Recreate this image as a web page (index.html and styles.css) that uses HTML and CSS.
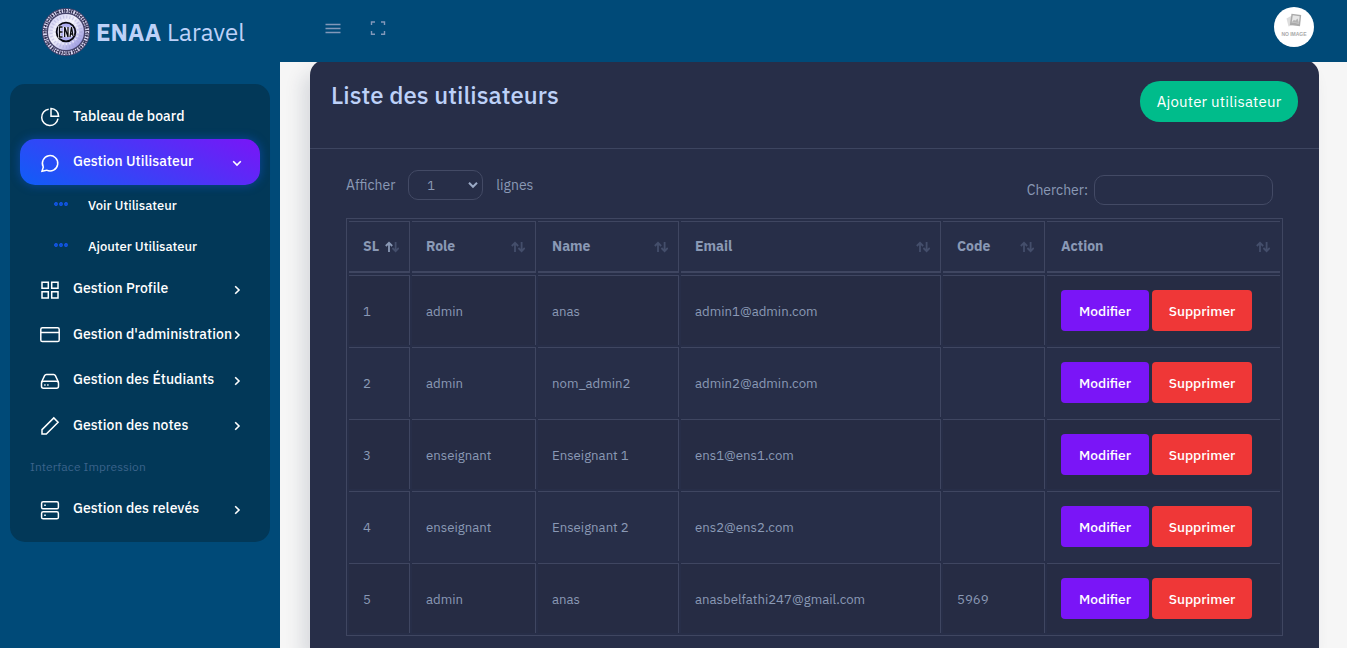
FILE: index.html
```html
<!DOCTYPE html>
<html lang="fr">
<head>
<meta charset="utf-8">
<title>ENAA Laravel</title>
<link rel="stylesheet" href="styles.css">
</head>
<body>
<div class="app">
  <aside class="sidebar">
    <a class="brand">
      <svg class="brand-logo" viewBox="0 0 48 48">
        <defs>
          <linearGradient id="seal" x1="0" y1="0" x2="1" y2="1"><stop offset="0" stop-color="#cfcef5"/><stop offset=".45" stop-color="#f0effa"/><stop offset="1" stop-color="#8583dc"/></linearGradient>
        </defs>
        <circle cx="24" cy="24" r="24" fill="#45436a"/>
        <circle cx="24" cy="24" r="21.2" fill="none" stroke="#d7d5ee" stroke-width="3.8" stroke-dasharray="1.3 1.2 .8 1.2 1.8 1"/>
        <circle cx="24" cy="24" r="21.2" fill="none" stroke="#28253f" stroke-width="1.2" stroke-dasharray="1 2.2 1.6 1.4"/>
        <circle cx="24" cy="24" r="18" fill="url(#seal)"/>
        <circle cx="24" cy="24" r="15" fill="none" stroke="#9d9bd0" stroke-width="3" stroke-dasharray="1.2 2" opacity=".4"/>
        <circle cx="24" cy="24" r="12" fill="none" stroke="#fff" stroke-width="2" stroke-dasharray="1.5 2" opacity=".6"/>
        <circle cx="24" cy="24" r="9.4" fill="#aeadf0" stroke="#08080f" stroke-width="1.8"/>
        <path d="M20.5 19H17.5V29H20.5M17.5 24H20.5M22.7 29V19L26 29V19M28 29L29.5 19L31 28M28 26H31" fill="none" stroke="#fff" stroke-width="2.6"/>
        <path d="M20.5 19H17.5V29H20.5M17.5 24H20.5M22.7 29V19L26 29V19M28 29L29.5 19L31 28M28 26H31" fill="none" stroke="#08080f" stroke-width="1.3"/>
      </svg>
      <span class="brand-name"><b>ENAA</b> Laravel</span>
    </a>
    <nav class="menu">
      <a class="item"><svg class="icon" viewBox="0 0 20 20"><path d="M8.7 2.2A8.2 8.2 0 1 0 18 11.7M11 1.5V9.2H18.6A7.7 7.7 0 0 0 11 1.5Z"/></svg><span>Tableau de board</span></a>
      <a class="item active"><svg class="icon" viewBox="0 0 20 20"><path d="M2 18.3L3.3 14A7.7 7.7 0 1 1 6.6 17.2Z"/></svg><span>Gestion Utilisateur</span><svg class="chev" viewBox="0 0 10 10"><path d="M1.2 3.2L5 7L8.8 3.2"/></svg></a>
      <a class="subitem"><svg class="dots" viewBox="0 0 14 4"><circle cx="2" cy="2" r="1.2"/><circle cx="7" cy="2" r="1.2"/><circle cx="12" cy="2" r="1.2"/></svg><span>Voir Utilisateur</span></a>
      <a class="subitem"><svg class="dots" viewBox="0 0 14 4"><circle cx="2" cy="2" r="1.2"/><circle cx="7" cy="2" r="1.2"/><circle cx="12" cy="2" r="1.2"/></svg><span>Ajouter Utilisateur</span></a>
      <a class="item"><svg class="icon" viewBox="0 0 20 20"><path d="M2 2.2H8.3V8.3H2ZM11.7 2.2H18V8.3H11.7ZM2 11.8H8.3V18H2ZM11.7 11.8H18V18H11.7Z"/></svg><span>Gestion Profile</span><svg class="chev" viewBox="0 0 10 10"><path d="M3.2 1.2L7 5L3.2 8.8"/></svg></a>
      <a class="item"><svg class="icon" viewBox="0 0 20 20"><rect x=".8" y="2.8" width="18.4" height="13.8" rx="1.6"/><path d="M.8 7.5H19.2"/></svg><span>Gestion d'administration</span><svg class="chev" viewBox="0 0 10 10"><path d="M3.2 1.2L7 5L3.2 8.8"/></svg></a>
      <a class="item"><svg class="icon" viewBox="0 0 20 20"><path d="M1.5 11.2L4.6 4.6Q5.2 3.4 6.4 3.4H13.6Q14.8 3.4 15.4 4.6L18.5 11.2"/><rect x="1.5" y="10.2" width="17" height="7" rx="2"/><path d="M4.2 14H5.6M7.2 14H8.6"/></svg><span>Gestion des Étudiants</span><svg class="chev" viewBox="0 0 10 10"><path d="M3.2 1.2L7 5L3.2 8.8"/></svg></a>
      <a class="item"><svg class="icon" viewBox="0 0 20 20"><path d="M2 18V13.6L13.8 1.9L18.1 6.2L6.3 18Z"/></svg><span>Gestion des notes</span><svg class="chev" viewBox="0 0 10 10"><path d="M3.2 1.2L7 5L3.2 8.8"/></svg></a>
      <div class="menu-label">Interface Impression</div>
      <a class="item"><svg class="icon" viewBox="0 0 20 20"><rect x="1.6" y="1.8" width="16.8" height="7" rx="1.6"/><rect x="1.6" y="11.8" width="16.8" height="7" rx="1.6"/><path d="M4.2 5.3H5.8M4.2 15.3H5.8"/></svg><span>Gestion des relevés</span><svg class="chev" viewBox="0 0 10 10"><path d="M3.2 1.2L7 5L3.2 8.8"/></svg></a>
    </nav>
  </aside>
  <div class="main">
    <header class="topbar">
      <svg class="top-icon" viewBox="0 0 16 16"><path d="M.5 4.5H15.5M.5 8.5H15.5M.5 12.5H15.5"/></svg>
      <svg class="top-icon" viewBox="0 0 16 16"><path class="full" d="M1.5 5V2H5M11 2H14.5V5M14.5 11V14.2H11M5 14.2H1.5V11"/></svg>
      <svg class="avatar" viewBox="0 0 40 40"><circle cx="20" cy="20" r="20" fill="#fff"/><path d="M12.5 11.5L17 9L19 18L14.5 19.5Z" fill="#ddd"/><path d="M17.5 6.8L27.2 8L26 19.3L15.8 18Z" fill="#aaa"/><path d="M18.8 8.3L25.7 9.2L24.8 16.5L17.7 15.6Z" fill="#e6e6e6"/><path d="M17.8 15.2L20 12.8L21.2 13.8L23.6 11.5L24.9 16L17.8 15.5Z" fill="#b4b4b4"/><text x="20" y="29.2" text-anchor="middle" class="no-image" textLength="25">NO IMAGE</text></svg>
    </header>
    <main class="content">
      <section class="card">
        <div class="card-head"><h3>Liste des utilisateurs</h3><a class="btn-add">Ajouter utilisateur</a></div>
        <div class="card-body">
          <div class="controls">
            <label class="length">Afficher <span class="select"><span>1</span><svg viewBox="0 0 10 8"><path d="M1 1.8L5 5.8L9 1.8"/></svg></span> lignes</label>
            <label class="search">Chercher: <input type="text"></label>
          </div>
          <table>
            <colgroup><col class="c1"><col class="c2"><col class="c3"><col class="c4"><col class="c5"><col class="c6"></colgroup>
            <thead><tr>
              <th><div class="th"><span>SL</span><svg viewBox="0 0 14 12"><path class="up" d="M4 11V2M.8 5L4 1.8L7.2 5"/><path d="M10.6 1V10M7.4 7L10.6 10.2L13.8 7"/></svg></div></th>
              <th><div class="th"><span>Role</span><svg viewBox="0 0 14 12"><path d="M4 11V2M.8 5L4 1.8L7.2 5"/><path d="M10.6 1V10M7.4 7L10.6 10.2L13.8 7"/></svg></div></th>
              <th><div class="th"><span>Name</span><svg viewBox="0 0 14 12"><path d="M4 11V2M.8 5L4 1.8L7.2 5"/><path d="M10.6 1V10M7.4 7L10.6 10.2L13.8 7"/></svg></div></th>
              <th><div class="th"><span>Email</span><svg viewBox="0 0 14 12"><path d="M4 11V2M.8 5L4 1.8L7.2 5"/><path d="M10.6 1V10M7.4 7L10.6 10.2L13.8 7"/></svg></div></th>
              <th><div class="th"><span>Code</span><svg viewBox="0 0 14 12"><path d="M4 11V2M.8 5L4 1.8L7.2 5"/><path d="M10.6 1V10M7.4 7L10.6 10.2L13.8 7"/></svg></div></th>
              <th><div class="th"><span>Action</span><svg viewBox="0 0 14 12"><path d="M4 11V2M.8 5L4 1.8L7.2 5"/><path d="M10.6 1V10M7.4 7L10.6 10.2L13.8 7"/></svg></div></th>
            </tr></thead>
            <tbody>
              <tr><td>1</td><td>admin</td><td>anas</td><td>admin1@admin.com</td><td></td><td><div class="actions"><a class="btn edit">Modifier</a><a class="btn del">Supprimer</a></div></td></tr>
              <tr><td>2</td><td>admin</td><td>nom_admin2</td><td>admin2@admin.com</td><td></td><td><div class="actions"><a class="btn edit">Modifier</a><a class="btn del">Supprimer</a></div></td></tr>
              <tr><td>3</td><td>enseignant</td><td>Enseignant 1</td><td>ens1@ens1.com</td><td></td><td><div class="actions"><a class="btn edit">Modifier</a><a class="btn del">Supprimer</a></div></td></tr>
              <tr><td>4</td><td>enseignant</td><td>Enseignant 2</td><td>ens2@ens2.com</td><td></td><td><div class="actions"><a class="btn edit">Modifier</a><a class="btn del">Supprimer</a></div></td></tr>
              <tr><td>5</td><td>admin</td><td>anas</td><td>anasbelfathi247@gmail.com</td><td>5969</td><td><div class="actions"><a class="btn edit">Modifier</a><a class="btn del">Supprimer</a></div></td></tr>
            </tbody>
          </table>
        </div>
      </section>
    </main>
  </div>
</div>
</body>
</html>
```
FILE: styles.css
```css
* { box-sizing: border-box; }
body { margin: 0; font-family: "IBM Plex Sans", Roboto, "Noto Sans", sans-serif; font-size: 14px; color: #8a99b5; }
svg { display: block; flex: none; fill: none; }
.app { display: flex; height: 648px; }

.sidebar { width: 280px; flex: none; background: #004a78; }
.brand { display: flex; align-items: center; height: 84px; padding: 0 0 20px 42px; gap: 6px; }
.brand-logo { width: 48px; height: 48px; }
.brand-name { font-size: 24px; color: #bdd1f8; white-space: nowrap; letter-spacing: .05px; }
.brand-name b { font-weight: 700; }
.menu { margin: 0 10px; height: 458px; padding: 10px; border-radius: 15px; background: #023858; color: #fff; }
.item { display: flex; align-items: center; height: 45.4px; padding: 0 18px 0 20px; border-radius: 15px; font-weight: 500; white-space: nowrap; }
.item span { margin: -2px 0 0 13px; flex: 1 0 0; width: 0; letter-spacing: .05px; }
.item.active { background: linear-gradient(28deg, #0f5ef7, #7a15f7); box-shadow: 0 0 10px 1px rgba(20, 90, 235, .4); }
.icon { width: 20px; height: 20px; stroke: #fff; stroke-width: 1.5; margin-top: 1px; }
.chev { width: 10px; height: 10px; stroke: #fff; stroke-width: 1.6; margin-top: 1px; }
.subitem { display: flex; align-items: center; height: 41px; padding-left: 34px; gap: 20px; font-size: 13px; font-weight: 500; }
.dots { width: 14px; height: 4px; stroke: #1458f5; stroke-width: 1.4; margin-top: -3px; }
.menu-label { height: 38px; line-height: 37px; padding-left: 10px; font-size: 12px; letter-spacing: .1px; color: #3b638b; }

.main { flex: 1; display: flex; flex-direction: column; min-width: 0; }
.topbar { position: relative; z-index: 2; flex: none; display: flex; align-items: center; height: 62px; padding: 0 33px 8px 45px; gap: 29px; background: #004a78; }
.top-icon { width: 16px; height: 16px; stroke: #8298b9; stroke-width: 1.3; margin-top: 2px; }
.top-icon .full { stroke-width: 1.4; }
.avatar { width: 40px; height: 40px; margin-left: auto; }
.no-image { font: 700 5px "Liberation Sans", sans-serif; fill: #aaa; }

.content { flex: 1; min-height: 0; padding: 0 28px 0 30px; background: #f6f6f6; overflow: clip; overflow-clip-margin: 2px; }
.card { height: 588px; margin-top: -2px; border-radius: 15px 15px 0 0; background: #272e48; box-shadow: -8px 12px 18px 0 rgba(25, 42, 70, .13); }
.card-head { display: flex; justify-content: space-between; height: 89px; padding: 21px 21px 0; border-bottom: 1px solid #3d4560; }
h3 { margin: 0; font-size: 24px; line-height: 29px; font-weight: 500; letter-spacing: .03px; color: #bdd1f8; }
.btn-add { width: 158px; height: 41px; border-radius: 20px; background: #00bc8b; color: #fff; font-size: 15px; line-height: 41px; text-align: center; letter-spacing: .2px; }
.card-body { padding: 21px 36px 0; }
.controls { display: flex; justify-content: space-between; height: 48px; padding-right: 10px; }
.length, .search { display: flex; align-items: center; height: 30px; gap: 13px; }
.search { gap: 6px; margin-top: 5px; }
.select { display: flex; align-items: center; justify-content: space-between; width: 75px; height: 30px; padding: 1px 4px 0 18px; border: 1px solid #434a65; border-radius: 10px; font-size: 13px; }
.select svg { width: 10px; height: 8px; stroke: #9baac6; stroke-width: 2; margin-top: -2px; }
.search input { width: 179px; height: 30px; border: 1px solid #434a65; border-radius: 10px; background: transparent; }

table { width: 937px; table-layout: fixed; border: 1px solid #3f4661; border-collapse: separate; border-spacing: 2px; }
.c1 { width: 61px; } .c2 { width: 124px; } .c3 { width: 141px; }
.c4 { width: 260px; } .c5 { width: 102px; } .c6 { width: 233px; }
th, td { padding: 0 0 0 14px; border: 0 solid #3f4661; border-top-width: 1px; border-right-width: 1px; text-align: left; }
th:last-child, td:last-child { border-right-width: 0; }
th { height: 52px; border-bottom-width: 2px; font-weight: 700; }
td { height: 70px; padding-top: 1px; font-size: 13.2px; }
tbody tr:nth-child(odd) td { background: #262c44; }
.th { display: flex; align-items: center; justify-content: space-between; padding-right: 10px; }
.th span { margin-top: -1px; }
.th svg { width: 14px; height: 12px; stroke: #444e6b; stroke-width: 1.8; margin-top: 1px; }
.th .up { stroke: #8a99b5; }
.actions { display: flex; gap: 3px; margin-top: -2px; }
.btn { height: 41px; border-radius: 4px; font-size: 13.8px; line-height: 42px; text-align: center; color: #fff; font-weight: 500; }
.edit { width: 88px; background: #7a15f7; }
.del { width: 100px; background: #ef3737; }
```
